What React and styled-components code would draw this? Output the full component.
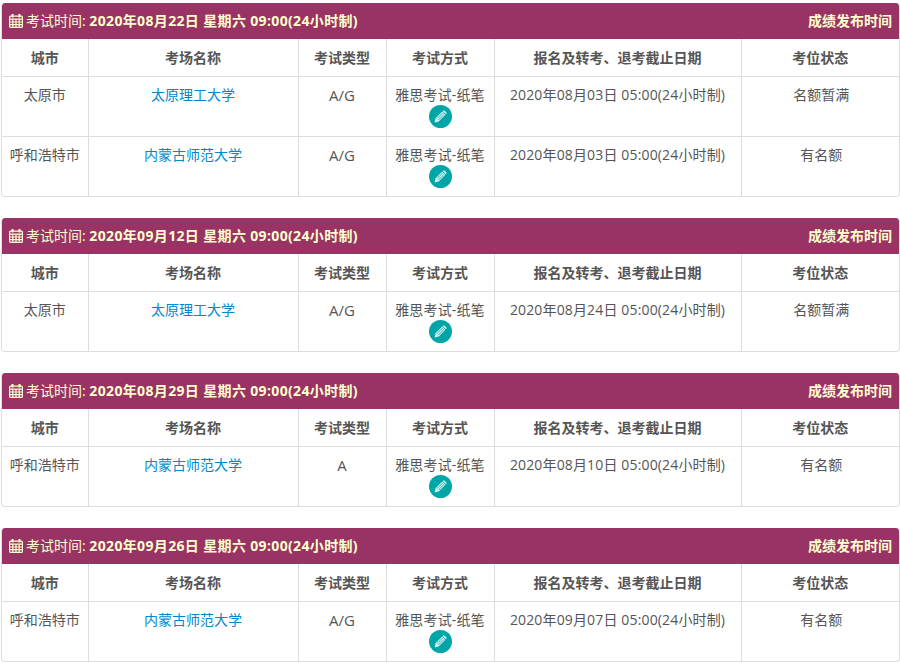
import React from "react";
import styled, { createGlobalStyle } from "styled-components";

const exams = [
  {
    time: "2020年08月22日 星期六 09:00(24小时制)",
    rows: [
      { city: "太原市", venue: "太原理工大学", type: "A/G", deadline: "2020年08月03日 05:00(24小时制)", status: "名额暂满" },
      { city: "呼和浩特市", venue: "内蒙古师范大学", type: "A/G", deadline: "2020年08月03日 05:00(24小时制)", status: "有名额" },
    ],
  },
  {
    time: "2020年09月12日 星期六 09:00(24小时制)",
    rows: [
      { city: "太原市", venue: "太原理工大学", type: "A/G", deadline: "2020年08月24日 05:00(24小时制)", status: "名额暂满" },
    ],
  },
  {
    time: "2020年08月29日 星期六 09:00(24小时制)",
    rows: [
      { city: "呼和浩特市", venue: "内蒙古师范大学", type: "A", deadline: "2020年08月10日 05:00(24小时制)", status: "有名额" },
    ],
  },
  {
    time: "2020年09月26日 星期六 09:00(24小时制)",
    rows: [
      { city: "呼和浩特市", venue: "内蒙古师范大学", type: "A/G", deadline: "2020年09月07日 05:00(24小时制)", status: "有名额" },
    ],
  },
];

const columns = ["城市", "考场名称", "考试类型", "考试方式", "报名及转考、退考截止日期", "考位状态"];
const widths = [86, 210, 88, 108, 247, 158];

const GlobalStyle = createGlobalStyle`
  html, body {
    margin: 0;
    padding: 0;
    background: #fff;
    overflow: hidden;
  }
  body {
    font-family: "Open Sans", "Noto Sans CJK SC", sans-serif;
    font-size: 14px;
    color: #555;
  }
`;

const Page = styled.div`
  display: flex;
  flex-direction: column;
  gap: 21px;
  width: 900px;
  padding: 3px 0 0 1px;
  box-sizing: border-box;
`;

const Card = styled.section`
  border: 1px solid #ddd;
  border-top: none;
  border-radius: 4px;
  overflow: hidden;
`;

const Header = styled.div`
  display: flex;
  align-items: center;
  justify-content: space-between;
  height: 36px;
  padding: 0 7px;
  background: #993366;
  color: #ffffcc;
  line-height: 20px;
`;

const ExamTime = styled.div`
  display: flex;
  align-items: center;
  gap: 3px;
  font-size: 14px;
`;

const Strong = styled.strong`
  font-weight: 700;
  letter-spacing: 0.35px;
`;

const ScoreLink = styled.span`
  font-weight: 700;
`;

const Table = styled.table`
  width: 100%;
  table-layout: fixed;
  border-collapse: collapse;
`;

const Th = styled.th`
  height: 37px;
  padding: 0;
  box-sizing: border-box;
  border-left: 1px solid #ddd;
  text-align: center;
  font-size: 14px;
  font-weight: 700;
  color: #555;
  &:first-child {
    border-left: none;
  }
`;

const Td = styled.td`
  height: 60px;
  padding: 8px 0 0;
  box-sizing: border-box;
  border-top: 1px solid #ddd;
  border-left: 1px solid #ddd;
  text-align: center;
  vertical-align: top;
  line-height: 20px;
  font-size: ${(p) => (p.$large ? "15px" : "14px")};
  letter-spacing: ${(p) => (p.$wide ? "0.15px" : "0")};
  &:first-child {
    border-left: none;
  }
  &:last-child {
    padding-left: 2px;
  }
`;

const VenueLink = styled.a`
  color: #0088cc;
  text-decoration: none;
`;

const RoundButton = styled.span`
  display: flex;
  align-items: center;
  justify-content: center;
  width: 23px;
  height: 23px;
  margin: 0 auto;
  border-radius: 50%;
  background: #00a5a8;
`;

const CalendarIcon = () => (
  <svg width="14" height="14" viewBox="0 0 14 14" fill="none" stroke="#ffffcc" strokeWidth="1.2">
    <rect x="0.6" y="2.1" width="12.8" height="11.3" rx="1" />
    <path d="M0.6 5.2H13.4M0.6 8H13.4M0.6 10.7H13.4M3.8 5.2V13.4M7 5.2V13.4M10.2 5.2V13.4" />
    <path d="M3.5 0V3.5M10.5 0V3.5" strokeWidth="2" />
  </svg>
);

const PencilIcon = () => (
  <svg width="13" height="13" viewBox="0 0 13 13">
    <path
      fill="#d5f2f2"
      d="M0.6 12.4L1.5 8.3L8.2 1.6L11.4 4.8L4.7 11.5ZM9 0.8C9.5 0.3 10.2 0.3 10.7 0.8L12.2 2.3C12.7 2.8 12.7 3.5 12.2 4L11.9 4.3L8.7 1.1Z"
    />
    <path fill="none" stroke="#00a5a8" strokeWidth="0.8" d="M3 8.6L8.6 3M4.4 10L10 4.4" />
  </svg>
);

function ExamCard({ exam }) {
  return (
    <Card>
      <Header>
        <ExamTime>
          <CalendarIcon />
          <span>
            考试时间: <Strong>{exam.time}</Strong>
          </span>
        </ExamTime>
        <ScoreLink>成绩发布时间</ScoreLink>
      </Header>
      <Table>
        <colgroup>
          {widths.map((w, i) => (
            <col key={i} style={{ width: w }} />
          ))}
        </colgroup>
        <thead>
          <tr>
            {columns.map((c) => (
              <Th key={c}>{c}</Th>
            ))}
          </tr>
        </thead>
        <tbody>
          {exam.rows.map((row, i) => (
            <tr key={i}>
              <Td>{row.city}</Td>
              <Td>
                <VenueLink href="#">{row.venue}</VenueLink>
              </Td>
              <Td $large>{row.type}</Td>
              <Td $wide>
                雅思考试-纸笔
                <RoundButton>
                  <PencilIcon />
                </RoundButton>
              </Td>
              <Td $wide>{row.deadline}</Td>
              <Td>{row.status}</Td>
            </tr>
          ))}
        </tbody>
      </Table>
    </Card>
  );
}

export default function App() {
  return (
    <>
      <GlobalStyle />
      <Page>
        {exams.map((exam) => (
          <ExamCard key={exam.time} exam={exam} />
        ))}
      </Page>
    </>
  );
}
